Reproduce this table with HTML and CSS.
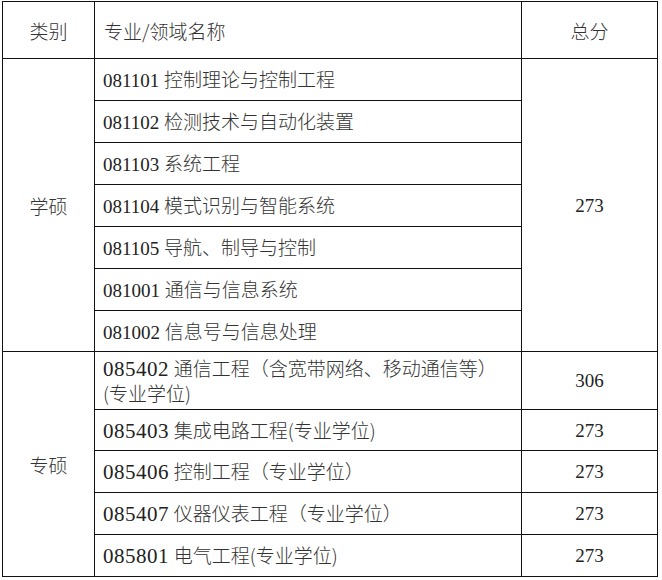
FILE: index.html
```html
<!DOCTYPE html>
<html lang="zh-CN">
<head>
<meta charset="utf-8">
<title>复试分数线</title>
<link rel="stylesheet" href="styles.css">
</head>
<body>
<div class="sheet">
  <div class="cell cat head"><span class="zh">类别</span></div>
  <div class="cell name head"><span class="zh">专业/领域名称</span></div>
  <div class="cell score head"><span class="zh">总分</span></div>

  <div class="cell cat span7"><span class="zh">学硕</span></div>
  <div class="cell name"><span><span class="num">081101</span> <span class="zh">控制理论与控制工程</span></span></div>
  <div class="cell score span7"><span class="num">273</span></div>
  <div class="cell name"><span><span class="num">081102</span> <span class="zh">检测技术与自动化装置</span></span></div>
  <div class="cell name"><span><span class="num">081103</span> <span class="zh">系统工程</span></span></div>
  <div class="cell name"><span><span class="num">081104</span> <span class="zh">模式识别与智能系统</span></span></div>
  <div class="cell name"><span><span class="num">081105</span> <span class="zh">导航、制导与控制</span></span></div>
  <div class="cell name"><span><span class="num">081001</span> <span class="zh">通信与信息系统</span></span></div>
  <div class="cell name"><span><span class="num">081002</span> <span class="zh">信息号与信息处理</span></span></div>

  <div class="cell cat span5"><span class="zh">专硕</span></div>
  <div class="cell name"><span><span class="num wide">085402</span> <span class="zh">通信工程（含宽带网络、移动通信等）<br>(专业学位)</span></span></div>
  <div class="cell score"><span class="num">306</span></div>
  <div class="cell name"><span><span class="num wide">085403</span> <span class="zh">集成电路工程(专业学位)</span></span></div>
  <div class="cell score"><span class="num">273</span></div>
  <div class="cell name"><span><span class="num wide">085406</span> <span class="zh">控制工程（专业学位）</span></span></div>
  <div class="cell score"><span class="num">273</span></div>
  <div class="cell name"><span><span class="num wide">085407</span> <span class="zh">仪器仪表工程（专业学位）</span></span></div>
  <div class="cell score"><span class="num">273</span></div>
  <div class="cell name"><span><span class="num wide">085801</span> <span class="zh">电气工程(专业学位)</span></span></div>
  <div class="cell score"><span class="num">273</span></div>
</div>
</body>
</html>
```
FILE: styles.css
```css
html, body {
  margin: 0;
  padding: 0;
  background: #fff;
}

body {
  padding: 1px 0 0 2px;
  font-family: "Liberation Serif", "Times New Roman", serif;
  font-size: 19px;
  color: #222;
}

.sheet {
  display: grid;
  width: 656px;
  box-sizing: border-box;
  grid-template-columns: 91px 426px 135px;
  grid-template-rows: 56px 41px 41px 41px 41px 41px 41px 40px 57px 40px 41px 41px 41px;
  gap: 1px;
  padding: 1px;
  background: #111;
}

.cell {
  background: #fff;
  display: flex;
  align-items: center;
  line-height: 23px;
}

.cat {
  grid-column: 1;
  justify-content: center;
}

.name {
  grid-column: 2;
  padding-left: 8px;
  white-space: nowrap;
}

.score {
  grid-column: 3;
  justify-content: center;
}

.head.name {
  padding-left: 9px;
}

.span7 {
  grid-row: span 7;
}

.span5 {
  grid-row: span 5;
}

.num {
  font-family: "Liberation Serif", "Times New Roman", serif;
}

.num.wide {
  font-size: 21px;
  letter-spacing: 0.5px;
}

.zh {
  font-family: "Noto Sans CJK SC", "Noto Sans CJK JP", sans-serif;
  font-weight: 300;
  color: #333;
}
```
